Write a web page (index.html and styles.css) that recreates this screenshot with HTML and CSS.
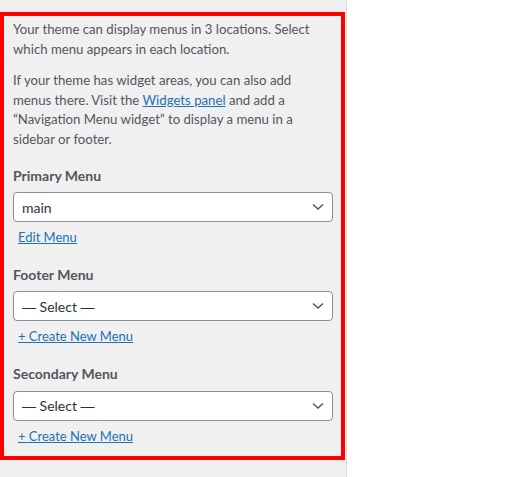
FILE: index.html
```html
<!DOCTYPE html>
<html lang="en">
<head>
<meta charset="utf-8">
<title>Menu Locations</title>
<link rel="stylesheet" href="styles.css">
</head>
<body>
<div class="panel">
  <div class="highlight">
    <p class="desc">Your theme can display menus in 3 locations. Select which menu appears in each location.</p>
    <p class="desc">If your theme has widget areas, you can also add menus there. Visit the <a href="#">Widgets panel</a> and add a “Navigation Menu widget” to display a menu in a sidebar or footer.</p>

    <div class="location">
      <div class="label">Primary Menu</div>
      <div class="select"><span>main</span><svg class="chev" width="12" height="8" viewBox="0 0 12 8"><path d="M1 1.5 L6 6 L11 1.5" fill="none" stroke="#50575e" stroke-width="1.5"/></svg></div>
      <a class="action" href="#">Edit Menu</a>
    </div>

    <div class="location">
      <div class="label">Footer Menu</div>
      <div class="select"><span><span class="dash">—</span> Select <span class="dash">—</span></span><svg class="chev" width="12" height="8" viewBox="0 0 12 8"><path d="M1 1.5 L6 6 L11 1.5" fill="none" stroke="#50575e" stroke-width="1.5"/></svg></div>
      <a class="action" href="#">+ Create New Menu</a>
    </div>

    <div class="location">
      <div class="label">Secondary Menu</div>
      <div class="select"><span><span class="dash">—</span> Select <span class="dash">—</span></span><svg class="chev" width="12" height="8" viewBox="0 0 12 8"><path d="M1 1.5 L6 6 L11 1.5" fill="none" stroke="#50575e" stroke-width="1.5"/></svg></div>
      <a class="action" href="#">+ Create New Menu</a>
    </div>
  </div>
</div>
</body>
</html>
```
FILE: styles.css
```css
* { box-sizing: border-box; }
html, body { margin: 0; padding: 0; background: #fff; }
body {
  font-family: Lato, "Open Sans", sans-serif;
  font-size: 13px;
  color: #50575e;
}
.panel {
  width: 347px;
  height: 477px;
  background: #f0f0f1;
  border-right: 1px solid #dcdcde;
  padding-top: 12px;
}
.highlight {
  width: 345px;
  border: 4px solid #ff0000;
  padding: 4px 8px 10px 9px;
}
.desc {
  margin: 0 0 12px;
  padding-right: 10px;
  line-height: 19.6px;
  font-size: 13.2px;
}
.desc a { color: #2271b1; text-decoration: underline; }
.location { margin-top: 16px; }
.location + .location { margin-top: 17px; }
.label {
  font-size: 14px;
  font-weight: 700;
  line-height: 19.6px;
  color: #50575e;
}
.select {
  margin-top: 7px;
  height: 30px;
  border: 1px solid #8c8f94;
  border-radius: 4px;
  background: #fff;
  display: flex;
  align-items: center;
  justify-content: space-between;
  padding: 0 8px 0 8px;
  font-size: 14px;
  color: #2c3338;
}
.dash { font-family: "Liberation Sans", sans-serif; }
.action {
  display: inline-block;
  margin-top: 6px;
  margin-left: 5px;
  line-height: 19.6px;
  font-size: 13px;
  color: #2271b1;
  text-decoration: underline;
}
```
